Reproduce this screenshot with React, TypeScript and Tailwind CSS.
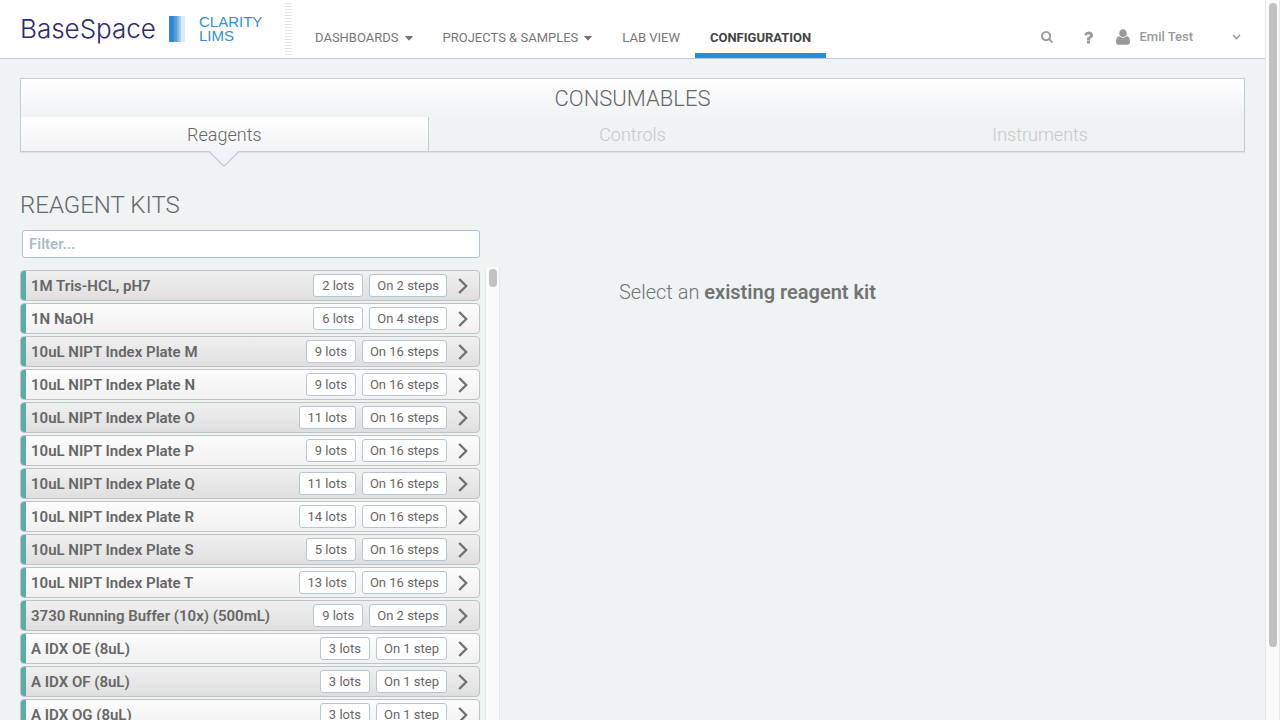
type Kit = { name: string; lots: number; steps: number };

const kits: Kit[] = [
  { name: "1M Tris-HCL, pH7", lots: 2, steps: 2 },
  { name: "1N NaOH", lots: 6, steps: 4 },
  { name: "10uL NIPT Index Plate M", lots: 9, steps: 16 },
  { name: "10uL NIPT Index Plate N", lots: 9, steps: 16 },
  { name: "10uL NIPT Index Plate O", lots: 11, steps: 16 },
  { name: "10uL NIPT Index Plate P", lots: 9, steps: 16 },
  { name: "10uL NIPT Index Plate Q", lots: 11, steps: 16 },
  { name: "10uL NIPT Index Plate R", lots: 14, steps: 16 },
  { name: "10uL NIPT Index Plate S", lots: 5, steps: 16 },
  { name: "10uL NIPT Index Plate T", lots: 13, steps: 16 },
  { name: "3730 Running Buffer (10x) (500mL)", lots: 9, steps: 2 },
  { name: "A IDX OE (8uL)", lots: 3, steps: 1 },
  { name: "A IDX OF (8uL)", lots: 3, steps: 1 },
  { name: "A IDX OG (8uL)", lots: 3, steps: 1 },
];

function SearchIcon() {
  return (
    <svg width="12" height="12" viewBox="64 128 1664 1664" fill="currentColor" aria-hidden="true">
      <path d="M1216 832q0-185-131.5-316.5t-316.5-131.5-316.5 131.5-131.5 316.5 131.5 316.5 316.5 131.5 316.5-131.5 131.5-316.5zm512 832q0 52-38 90t-90 38q-54 0-90-38l-343-342q-179 124-399 124-143 0-273.5-55.5t-225-150-150-225-55.5-273.5 55.5-273.5 150-225 225-150 273.5-55.5 273.5 55.5 225 150 150 225 55.5 273.5q0 220-124 399l343 343q37 37 37 90z" />
    </svg>
  );
}

function HelpIcon() {
  return (
    <svg width="9" height="13" viewBox="460 256 944 1280" fill="currentColor" aria-hidden="true">
      <path d="M1088 1256v240q0 16-12 28t-28 12h-240q-16 0-28-12t-12-28v-240q0-16 12-28t28-12h240q16 0 28 12t12 28zm316-600q0 54-15.5 101t-35 76.5-55 59.5-57.5 43.5-61 35.5q-41 23-68.5 65t-27.5 67q0 17-12 32.5t-28 15.5h-240q-15 0-25.5-18.5t-10.5-37.5v-45q0-83 65-156.5t143-108.5q59-27 84-56t25-76q0-42-46.5-74t-107.5-32q-65 0-108 29-35 25-107 115-13 16-31 16-12 0-25-8l-164-125q-13-10-15.5-25t5.5-28q160-266 464-266 80 0 161 31t146 83 106 127.5 41 158.5z" />
    </svg>
  );
}

function UserIcon() {
  return (
    <svg className="mr-[9px]" width="14" height="16" viewBox="192 128 1408 1536" fill="currentColor" aria-hidden="true">
      <path d="M1600 1405q0 120-73 189.5t-194 69.5h-874q-121 0-194-69.5t-73-189.5q0-53 3.5-103.5t14-109 26.5-108.5 43-97.5 62-81 85.5-53.5 111.5-20q9 0 42 21.5t74.5 48 108 48 133.500 21.5 133.500-21.5 108-48 74.500-48 42-21.500q61 0 111.500 20t85.500 53.500 62 81 43 97.500 26.500 108.500 14 109 3.500 103.500zm-320-893q0 159-112.500 271.500t-271.500 112.500-271.500-112.500-112.500-271.500 112.500-271.500 271.500-112.500 271.500 112.500 112.500 271.500z" />
    </svg>
  );
}

function Caret() {
  return (
    <svg width="8" height="5" viewBox="0 0 8 5" fill="currentColor" aria-hidden="true">
      <path d="M0.600 0H7.400Q8 0.200 7.700 0.800L4.400 4.300Q4 4.600 3.600 4.300L0.300 0.800Q0 0.200 0.600 0Z" />
    </svg>
  );
}

function Logo() {
  return (
    <a href="#home" className="flex h-full shrink-0 items-center pl-5">
      <span className="w-[149px] font-['Inter',sans-serif] text-[26px] leading-[58px] font-light text-[#2b2b6f]">
        BaseSpace
      </span>
      <svg width="16" height="26" viewBox="0 0 16 26" aria-hidden="true">
        <rect width="5" height="26" fill="#2e8bd0" />
        <rect x="5" width="3" height="26" fill="#539fd9" />
        <rect x="8" width="2" height="26" fill="#7db6e2" />
        <rect x="10" width="2" height="26" fill="#a9cfec" />
        <rect x="12" width="4" height="26" fill="#dcebf7" />
      </svg>
      <span className="ml-3.5 w-[86px] font-['Liberation_Sans',sans-serif] text-[15px] leading-[14px] text-[#3590d2]">
        CLARITY
        <br />
        LIMS
      </span>
    </a>
  );
}

function Header() {
  const link = "flex h-full items-center gap-1.5 px-[15px] pt-[18px] text-[#777]";
  return (
    <header className="flex h-[59px] shrink-0 border-b border-[#b9cbd8] bg-white font-['Roboto',sans-serif] text-[13px]">
      <Logo />
      <div className="mt-[3px] mr-2 h-[52px] w-[7px] shrink-0 bg-[repeating-linear-gradient(to_bottom,#e4e4e4_0,#e4e4e4_1px,transparent_1px,transparent_3px)]" />
      <nav className="flex h-full whitespace-nowrap">
        <a href="#dashboards" className={link}>
          DASHBOARDS <Caret />
        </a>
        <a href="#projects" className={link}>
          PROJECTS &amp; SAMPLES <Caret />
        </a>
        <a href="#lab" className={link}>
          LAB VIEW
        </a>
        <a
          href="#configuration"
          aria-current="page"
          className="flex h-full items-center border-b-[5px] border-[#318cce] px-[15px] pt-[23px] font-bold text-[#444]"
        >
          CONFIGURATION
        </a>
      </nav>
      <div className="ml-auto flex items-center pt-4 pr-6 text-[#999]">
        <button type="button" aria-label="Search" className="mr-[31px]">
          <SearchIcon />
        </button>
        <button type="button" aria-label="Help" className="mr-[23px]">
          <HelpIcon />
        </button>
        <button type="button" className="flex items-center font-medium">
          <UserIcon />
          Emil Test
          <svg className="ml-[39px]" width="9" height="6" viewBox="0 0 9 6" fill="none" stroke="currentColor" strokeWidth="1.6" aria-hidden="true">
            <path d="M1 1l3.5 3.5L8 1" />
          </svg>
        </button>
      </div>
    </header>
  );
}

function Consumables() {
  return (
    <section className="border border-[#c0d0d3] bg-[linear-gradient(to_bottom,#ffffff_0,#eff3f4_38px)] shadow-[0_1px_1px_#dde5e7]">
      <h1 className="h-[38px] text-center text-[22px] leading-[39px] font-light text-[#666]">
        CONSUMABLES
      </h1>
      <nav className="grid grid-cols-3 text-center text-[18px] leading-8 font-light text-[#c8c8c8]">
        <a
          href="#reagents"
          aria-current="page"
          className="relative border-r border-[#c0d0d3] bg-linear-to-b from-white to-[#f2f3f5] pt-0.5 text-[#666]"
        >
          Reagents
          <svg className="absolute top-[34px] left-1/2 -translate-x-1/2" width="32" height="18" viewBox="0 0 32 18" aria-hidden="true">
            <path d="M1 0H31L16 15.500Z" fill="#f0f3f5" />
            <path d="M0.5 0L16 15.2L31.5 0" fill="none" stroke="#c3d1d4" strokeWidth="1.4" />
          </svg>
        </a>
        <a href="#controls" className="pt-0.5">Controls</a>
        <a href="#instruments" className="pt-0.5">Instruments</a>
      </nav>
    </section>
  );
}

function KitRow({ name, lots, steps }: Kit) {
  const tag = "h-[23px] rounded-[3px] border border-[#b4c6cf] bg-white text-[13px] leading-[21px] font-normal";
  return (
    <li className="group">
      <button
        type="button"
        className="flex h-[31px] w-full items-center overflow-hidden rounded-[4px] border border-[#bfc1c2] bg-linear-to-b from-[#fcfcfc] to-[#f1f1f1] text-left whitespace-nowrap text-[#666] group-odd:from-[#f0f0f0] group-odd:to-[#dfdfdf]"
      >
        <span className="h-full w-[5px] bg-[#5aaca5]" />
        <span className="ml-[5px] flex-1 pt-0.5 text-[15px] font-semibold">{name}</span>
        <span className={"px-2 " + tag}>{lots} lots</span>
        <span className={"ml-1.5 px-[7px] " + tag}>
          On {steps} {steps === 1 ? "step" : "steps"}
        </span>
        <svg className="mx-[11px]" width="10" height="16" viewBox="0 0 10 16" fill="none" stroke="#707070" strokeWidth="2.3" aria-hidden="true">
          <path d="M1.2 1L8.2 8L1.2 15" />
        </svg>
      </button>
    </li>
  );
}

export default function App() {
  return (
    <div className="flex h-screen overflow-hidden bg-[#eff3f4] font-['Roboto',sans-serif]">
      <div className="flex min-w-0 flex-1 flex-col">
        <Header />
        <main className="flex min-h-0 flex-1 flex-col px-5 pt-[19px]">
          <Consumables />
          <div className="flex min-h-0 flex-1 pt-9">
            <section className="flex w-[480px] shrink-0 flex-col">
              <h2 className="text-[24px] leading-[34px] font-light text-[#666]">REAGENT KITS</h2>
              <input
                type="text"
                aria-label="Filter reagent kits"
                placeholder="Filter..."
                className="mt-2 mr-5 ml-0.5 h-7 shrink-0 rounded-[3px] border border-[#aec2ca] bg-white px-1.5 text-[15px] font-semibold text-[#666] outline-none placeholder:text-[#a9bdc6]"
              />
              <div className="mt-[9px] flex min-h-0 flex-1 overflow-hidden">
                <ul className="mt-[3px] flex flex-1 flex-col gap-0.5">
                  {kits.map((kit) => (
                    <KitRow key={kit.name} {...kit} />
                  ))}
                </ul>
                <div className="ml-[5px] w-[15px] border-x border-[#e8e8e8] bg-[#fafafa] pt-0.5">
                  <div className="ml-[3px] h-[18px] w-2 rounded-full bg-[#c1c1c1]" />
                </div>
              </div>
            </section>
            <p className="ml-[119px] pt-[90px] text-[20px] leading-7 font-light text-[#737373]">
              Select an <strong className="font-semibold">existing reagent kit</strong>
            </p>
          </div>
        </main>
      </div>
      <div className="w-[15px] shrink-0 border-x border-[#e8e8e8] bg-[#fafafa] pt-[3px]">
        <div className="ml-[3px] h-[644px] w-2 rounded-full bg-[#c1c1c1]" />
      </div>
    </div>
  );
}
